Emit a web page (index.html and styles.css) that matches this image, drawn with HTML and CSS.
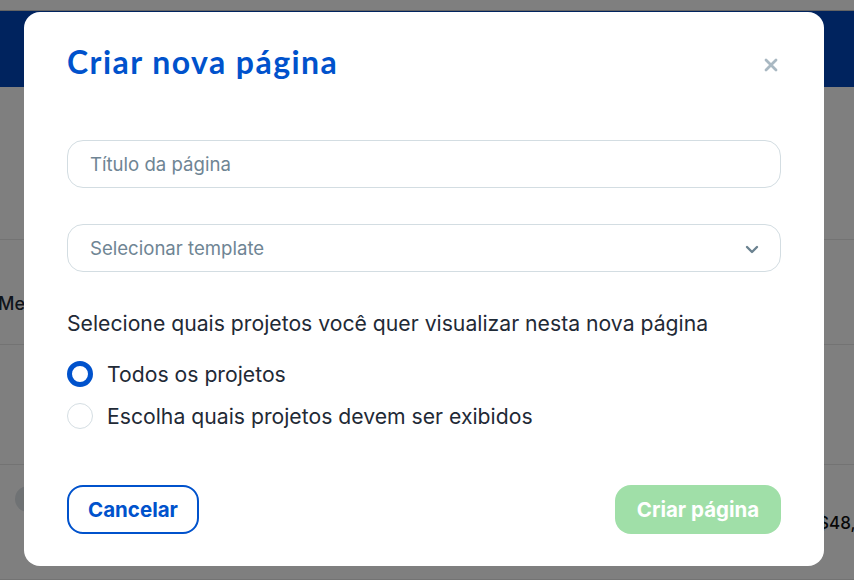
FILE: index.html
```html
<!DOCTYPE html>
<html lang="pt-BR">
<head>
<meta charset="utf-8">
<title>Criar nova página</title>
<link rel="stylesheet" href="styles.css">
</head>
<body>
<div class="page">
  <div class="topstrip"></div>
  <header class="appbar"></header>
  <section class="band band-a"></section>
  <section class="band band-b"><span class="menu-text">Menu</span></section>
  <section class="band band-c"></section>
  <section class="band band-d">
    <span class="pill">F</span>
    <span class="amount">$48,</span>
  </section>
</div>

<div class="overlay">
  <div class="modal" role="dialog" aria-labelledby="modal-title">
    <div class="modal-head">
      <h1 id="modal-title" class="modal-title">Criar nova página</h1>
      <button class="close" aria-label="Fechar">
        <svg width="14" height="14" viewBox="0 0 14 14"><path d="M2 2L12 12M12 2L2 12" stroke="#a9b8c2" stroke-width="2.8" stroke-linecap="round"/></svg>
      </button>
    </div>

    <div class="field">
      <span class="placeholder">Título da página</span>
    </div>

    <div class="field field-select">
      <span class="placeholder">Selecionar template</span>
      <svg class="chevron" width="14" height="9" viewBox="0 0 14 9"><path d="M2 2L7 7L12 2" fill="none" stroke="#6b8290" stroke-width="2.4" stroke-linecap="round" stroke-linejoin="round"/></svg>
    </div>

    <p class="question">Selecione quais projetos você quer visualizar nesta nova página</p>

    <div class="options">
      <div class="option">
        <span class="radio radio-on"></span>
        <span class="option-label">Todos os projetos</span>
      </div>
      <div class="option">
        <span class="radio"></span>
        <span class="option-label">Escolha quais projetos devem ser exibidos</span>
      </div>
    </div>

    <div class="actions">
      <button class="btn btn-outline">Cancelar</button>
      <button class="btn btn-primary">Criar página</button>
    </div>
  </div>
</div>
</body>
</html>
```

FILE: styles.css
```css
* { box-sizing: border-box; }

html, body {
  margin: 0;
  padding: 0;
  width: 854px;
  height: 580px;
  overflow: hidden;
  font-family: Inter, "Noto Sans", sans-serif;
}

.page {
  width: 854px;
  height: 580px;
  background: #ffffff;
  display: flex;
  flex-direction: column;
}

.topstrip {
  height: 11px;
  background: #ffffff;
  border-bottom: 1px solid #c8c8c8;
}

.appbar {
  height: 76px;
  background: #0046bd;
}

.band {
  border-bottom: 1px solid #e6e6e6;
  display: flex;
  align-items: center;
}

.band-a { height: 153px; }
.band-b { height: 105px; padding-top: 22px; }
.band-c { height: 120px; }
.band-d { flex: 1; position: relative; }

.menu-text {
  margin-left: -2px;
  font-size: 18px;
  font-weight: 500;
  color: #1f2a36;
}

.pill {
  position: absolute;
  left: 15px;
  top: 21px;
  width: 26px;
  height: 26px;
  border-radius: 50%;
  background: #dfe4e8;
  color: #3a4a58;
  font-size: 15px;
  font-weight: 600;
  display: flex;
  align-items: center;
  justify-content: center;
}

.amount {
  position: absolute;
  left: 818px;
  top: 48px;
  font-size: 17px;
  font-weight: 500;
  color: #111;
}

.overlay {
  position: fixed;
  inset: 0;
  background: rgba(0, 0, 0, 0.5);
}

.modal {
  position: absolute;
  left: 24px;
  top: 12px;
  width: 800px;
  height: 554px;
  background: #ffffff;
  border-radius: 16px;
  padding: 32px 43px 32px 43px;
  display: flex;
  flex-direction: column;
}

.modal-head {
  display: flex;
  align-items: center;
  justify-content: space-between;
  height: 36px;
}

.modal-title {
  margin: 0;
  font-family: Lato, "Noto Sans", sans-serif;
  font-size: 32px;
  font-weight: 700;
  line-height: 36px;
  color: #0052cc;
  letter-spacing: 1.45px;
}

.close {
  border: 0;
  background: none;
  padding: 0;
  margin-top: 6px;
  margin-right: 3px;
  width: 14px;
  height: 14px;
  display: flex;
}

.field {
  margin-top: 60px;
  height: 48px;
  border: 1px solid #d3dde2;
  border-radius: 16px;
  padding: 0 22px;
  display: flex;
  align-items: center;
  justify-content: space-between;
}

.field-select {
  margin-top: 36px;
}

.placeholder {
  font-size: 18.6px;
  color: #6f8594;
}

.chevron {
  margin-right: -1px;
  margin-top: 2px;
}

.question {
  margin: 39px 0 0 0;
  font-size: 21.2px;
  line-height: 24px;
  color: #1f2a36;
}

.options {
  margin-top: 25px;
  display: flex;
  flex-direction: column;
  gap: 14px;
}

.option {
  height: 28px;
  display: flex;
  align-items: center;
  gap: 14px;
}

.radio {
  width: 26px;
  height: 26px;
  border-radius: 50%;
  border: 1px solid #d5dee3;
  flex: none;
}

.radio-on {
  border: 5px solid #0052cc;
}

.option-label {
  font-size: 21.2px;
  color: #1f2a36;
}

.actions {
  margin-top: auto;
  display: flex;
  justify-content: space-between;
}

.btn {
  height: 49px;
  border-radius: 16px;
  font-family: Inter, "Noto Sans", sans-serif;
  font-size: 20.5px;
  font-weight: 700;
  cursor: pointer;
}

.btn-outline {
  width: 132px;
  background: #ffffff;
  border: 2px solid #0052cc;
  color: #0052cc;
}

.btn-primary {
  width: 166px;
  background: #a0dfa8;
  border: 0;
  color: #ffffff;
}
```
